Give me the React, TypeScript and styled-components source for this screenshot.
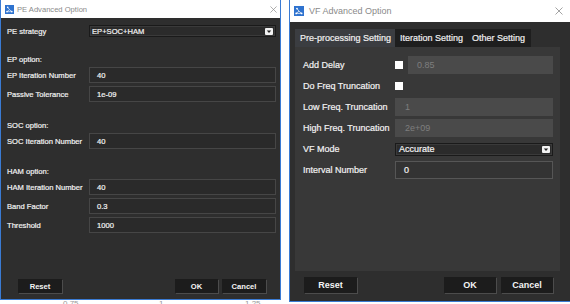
import React from "react";
import styled, { createGlobalStyle } from "styled-components";

const Global = createGlobalStyle`
  html, body { margin: 0; padding: 0; background: #ffffff; width: 570px; height: 304px; overflow: hidden; }
  #root { width: 570px; height: 304px; }
  * { box-sizing: border-box; }
`;

const FONT = `"Liberation Sans", Arial, sans-serif`;

const Desktop = styled.div`
  display: flex;
  align-items: flex-start;
  gap: 8px;
  width: 570px;
  height: 304px;
  overflow: hidden;
  font-family: ${FONT};
`;

const Column = styled.div`
  display: flex;
  flex-direction: column;
  flex: none;
`;

const Window = styled.div<{ $w: number; $h: number; $fs: number }>`
  flex: none;
  width: ${(p) => p.$w}px;
  height: ${(p) => p.$h}px;
  display: flex;
  flex-direction: column;
  border: 1px solid #3a7bd4;
  border-top: none;
  background: #2e2e2e;
  font-size: ${(p) => p.$fs}px;
  color: #f2f2f2;
  overflow: hidden;
`;

const TitleBar = styled.div<{ $h: number; $gap: number }>`
  flex: none;
  height: ${(p) => p.$h}px;
  background: #ffffff;
  display: flex;
  align-items: center;
  padding-left: 4px;
  gap: ${(p) => p.$gap}px;
`;

const TitleText = styled.span`
  flex: 1;
  color: #8a8a8a;
  white-space: nowrap;
`;

const CloseBox = styled.span<{ $mr: number }>`
  display: flex;
  margin-right: ${(p) => p.$mr}px;
`;

const AppIcon = ({ size }: { size: number }) => (
  <svg width={size} height={size} viewBox="0 0 10 10">
    <rect width="10" height="10" fill="#2f73cf" />
    <circle cx="3" cy="2.6" r="0.9" fill="#fff" />
    <circle cx="2.2" cy="7.4" r="0.9" fill="#fff" />
    <circle cx="7.6" cy="7.4" r="0.9" fill="#fff" />
    <path d="M3 2.6 L5 5.2 M2.2 7.4 L7.6 7.4 M5 5.2 L2.2 7.4 M5 5.2 L7.6 7.4" stroke="#fff" strokeWidth="0.7" />
  </svg>
);

const CloseIcon = ({ size }: { size: number }) => (
  <svg width={size} height={size} viewBox="0 0 8 8">
    <path d="M0.5 0.5 L7.5 7.5 M7.5 0.5 L0.5 7.5" stroke="#8c8c8c" strokeWidth="0.8" />
  </svg>
);

const ComboArrow = () => (
  <svg width="8" height="7" viewBox="0 0 8 7">
    <rect x="0" y="0" width="8" height="7" rx="1" fill="#f2f2f2" />
    <path d="M1.8 2.4 L6.2 2.4 L4 5 Z" fill="#222" />
  </svg>
);

/* ---------- left window ---------- */

const LeftBody = styled.div`
  flex: 1;
  display: flex;
  flex-direction: column;
  padding: 7px 4px 6px 6px;
  -webkit-text-stroke: 0.2px currentColor;
`;

const Row = styled.div<{ $h: number; $mt: number; $label: number }>`
  flex: none;
  display: grid;
  grid-template-columns: ${(p) => p.$label}px 1fr;
  align-items: center;
  height: ${(p) => p.$h}px;
  margin-top: ${(p) => p.$mt}px;
  white-space: nowrap;
`;

const SectionTitle = styled.div<{ $mt: number }>`
  flex: none;
  height: 12px;
  margin-top: ${(p) => p.$mt}px;
  display: flex;
  align-items: center;
`;

const Label = styled.span`
  white-space: nowrap;
`;

const TextField = styled.div<{ $pad: number }>`
  height: 100%;
  display: flex;
  align-items: center;
  padding-left: ${(p) => p.$pad}px;
  background: #2a2a2a;
  border: 1px solid #464646;
  color: #f4f4f4;
`;

const Combo = styled.div<{ $h: number; $pad: number }>`
  height: ${(p) => p.$h}px;
  display: flex;
  align-items: center;
  justify-content: space-between;
  padding: 0 2px 0 ${(p) => p.$pad}px;
  background: #2b2b2b;
  border: 1px solid #1a1a1a;
  box-shadow: inset 0 0 0 1px #3a3a3a;
  color: #f4f4f4;
`;

const Footer = styled.div<{ $pl: number; $pr: number; $mt: string; $gap: number }>`
  flex: none;
  display: flex;
  align-items: center;
  margin-top: ${(p) => p.$mt};
  padding-left: ${(p) => p.$pl}px;
  padding-right: ${(p) => p.$pr}px;
  gap: ${(p) => p.$gap}px;
`;

const Push = styled.div`
  flex: 1;
`;

const Button = styled.div<{ $w: number; $h: number }>`
  flex: none;
  width: ${(p) => p.$w}px;
  height: ${(p) => p.$h}px;
  display: flex;
  align-items: center;
  justify-content: center;
  background: #1c1c1c;
  box-shadow: 1px 1px 0 #4c4c4c;
  color: #f4f4f4;
  font-weight: bold;
  -webkit-text-stroke: 0;
`;

const Axis = styled.div`
  position: relative;
  height: 4px;
  overflow: hidden;
  font-size: 8px;
  color: #9a9a9a;
`;

const AxisTick = styled.span`
  position: absolute;
  top: 0;
  line-height: 8px;
`;

/* ---------- right window ---------- */

const RightBody = styled.div`
  flex: 1;
  display: flex;
  flex-direction: column;
  padding: 7px 0 8px 5px;
  -webkit-text-stroke: 0.2px currentColor;
`;

const TabBar = styled.div`
  flex: none;
  width: 236px;
  height: 18px;
  display: flex;
  background: #1e1e1e;
`;

const Tab = styled.div<{ $active?: boolean }>`
  display: flex;
  align-items: center;
  padding: 0 4px 0 5px;
  white-space: nowrap;
  background: ${(p) => (p.$active ? "#3b3d41" : "transparent")};
  color: #f0f0f0;
`;

const Panel = styled.div`
  flex: none;
  width: 265px;
  height: 224px;
  background: #383838;
  padding: 9px 7px 0 8px;
  display: grid;
  grid-template-columns: 92px 158px;
  grid-auto-rows: 18px;
  row-gap: 3px;
  align-content: start;
  align-items: center;
`;

const Controls = styled.div`
  display: flex;
  align-items: center;
  gap: 5px;
  height: 100%;
`;

const Check = styled.span`
  flex: none;
  width: 8px;
  height: 8px;
  background: #ffffff;
`;

const Field = styled.div<{ $disabled?: boolean; $pad: number }>`
  flex: 1;
  height: 100%;
  display: flex;
  align-items: center;
  padding-left: ${(p) => p.$pad}px;
  background: ${(p) => (p.$disabled ? "#4a4a4a" : "#333333")};
  border: 1px solid ${(p) => (p.$disabled ? "#4a4a4a" : "#565656")};
  color: ${(p) => (p.$disabled ? "#7e7e7e" : "#f4f4f4")};
  -webkit-text-stroke: ${(p) => (p.$disabled ? "0" : "0.2px currentColor")};
`;

const RightFooter = styled(Footer)`
  height: 16px;
`;

export default function App() {
  return (
    <>
      <Global />
      <Desktop>
        <Column>
          <Window $w={281} $h={300} $fs={7.6}>
            <TitleBar $h={18} $gap={3}>
              <AppIcon size={9} />
              <TitleText>PE Advanced Option</TitleText>
              <CloseBox $mr={3}>
                <CloseIcon size={7} />
              </CloseBox>
            </TitleBar>
            <LeftBody>
              <Row $h={12} $mt={0} $label={82}>
                <Label>PE strategy</Label>
                <Combo $h={12} $pad={2}>
                  <span>EP+SOC+HAM</span>
                  <ComboArrow />
                </Combo>
              </Row>

              <SectionTitle $mt={16}>EP option:</SectionTitle>
              <Row $h={16} $mt={2} $label={82}>
                <Label>EP Iteration Number</Label>
                <TextField $pad={7}>40</TextField>
              </Row>
              <Row $h={16} $mt={3} $label={82}>
                <Label>Passive Tolerance</Label>
                <TextField $pad={7}>1e-09</TextField>
              </Row>

              <SectionTitle $mt={17}>SOC option:</SectionTitle>
              <Row $h={16} $mt={2} $label={82}>
                <Label>SOC Iteration Number</Label>
                <TextField $pad={7}>40</TextField>
              </Row>

              <SectionTitle $mt={16}>HAM option:</SectionTitle>
              <Row $h={16} $mt={2} $label={82}>
                <Label>HAM Iteration Number</Label>
                <TextField $pad={7}>40</TextField>
              </Row>
              <Row $h={16} $mt={3} $label={82}>
                <Label>Band Factor</Label>
                <TextField $pad={7}>0.3</TextField>
              </Row>
              <Row $h={16} $mt={3} $label={82}>
                <Label>Threshold</Label>
                <TextField $pad={7}>1000</TextField>
              </Row>

              <Footer $pl={11} $pr={10} $mt="auto" $gap={4}>
                <Button $w={44} $h={14}>Reset</Button>
                <Push />
                <Button $w={43} $h={14}>OK</Button>
                <Button $w={44} $h={14}>Cancel</Button>
              </Footer>
            </LeftBody>
          </Window>
          <Axis>
            <AxisTick style={{ left: 63 }}>0.75</AxisTick>
            <AxisTick style={{ left: 159 }}>1</AxisTick>
            <AxisTick style={{ left: 245 }}>1.25</AxisTick>
          </Axis>
        </Column>

        <Window $w={282} $h={302} $fs={9}>
          <TitleBar $h={22} $gap={5}>
            <AppIcon size={10} />
            <TitleText>VF Advanced Option</TitleText>
            <CloseBox $mr={7}>
              <CloseIcon size={8} />
            </CloseBox>
          </TitleBar>
          <RightBody>
            <TabBar>
              <Tab $active>Pre-processing Setting</Tab>
              <Tab>Iteration Setting</Tab>
              <Tab>Other Setting</Tab>
            </TabBar>
            <Panel>
              <Label>Add Delay</Label>
              <Controls>
                <Check />
                <Field $disabled $pad={8}>0.85</Field>
              </Controls>

              <Label>Do Freq Truncation</Label>
              <Controls>
                <Check />
              </Controls>

              <Label>Low Freq. Truncation</Label>
              <Controls>
                <Field $disabled $pad={9}>1</Field>
              </Controls>

              <Label>High Freq. Truncation</Label>
              <Controls>
                <Field $disabled $pad={9}>2e+09</Field>
              </Controls>

              <Label>VF Mode</Label>
              <Combo $h={13} $pad={3}>
                <span>Accurate</span>
                <ComboArrow />
              </Combo>

              <Label>Interval Number</Label>
              <Controls>
                <Field $pad={8}>0</Field>
              </Controls>
            </Panel>
            <RightFooter $pl={9} $pr={17} $mt="6px" $gap={5}>
              <Button $w={53} $h={16}>Reset</Button>
              <Push />
              <Button $w={52} $h={16}>OK</Button>
              <Button $w={52} $h={16}>Cancel</Button>
            </RightFooter>
          </RightBody>
        </Window>
      </Desktop>
    </>
  );
}
